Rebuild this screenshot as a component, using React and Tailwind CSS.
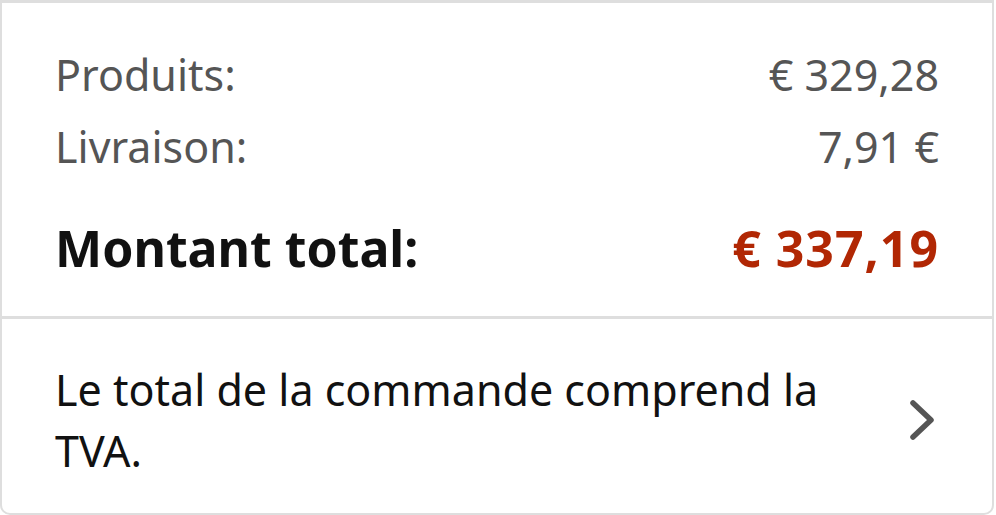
import React from "react";

export default function App() {
  return (
    <div className="w-[996px] h-[515px] bg-white" style={{ fontFamily: '"Noto Sans", "Open Sans", sans-serif' }}>
      <div className="w-[994px] h-[515px] border-2 border-t-[3px] border-[#dedede] rounded-b-[10px] flex flex-col">
        <div className="px-[53px] pt-[36px] pb-[3px]">
          <div className="flex justify-between items-center h-[72px] text-[43px] text-[#555555]">
            <span>Produits:</span>
            <span>€ 329,28</span>
          </div>
          <div className="flex justify-between items-center h-[72px] text-[43px] text-[#555555]">
            <span>Livraison:</span>
            <span>7,91 €</span>
          </div>
          <div className="flex justify-between items-center h-[130px] text-[50px] font-bold">
            <span className="text-[#111111]">Montant total:</span>
            <span className="text-[#b12704] tracking-[1px]">€ 337,19</span>
          </div>
        </div>
        <div className="h-[3px] bg-[#dedede]" />
        <div className="flex items-center justify-between pl-[53px] pr-[55px] pt-[40px]">
          <p className="text-[43px] leading-[61px] text-[#111111] w-[820px]">
            Le total de la commande comprend la TVA.
          </p>
          <svg width="28" height="42" viewBox="0 0 28 42" className="mt-[0px]">
            <path d="M4 4 L22 21 L4 38" fill="none" stroke="#555555" strokeWidth="5.5" strokeLinecap="round" strokeLinejoin="round" />
          </svg>
        </div>
      </div>
    </div>
  );
}
